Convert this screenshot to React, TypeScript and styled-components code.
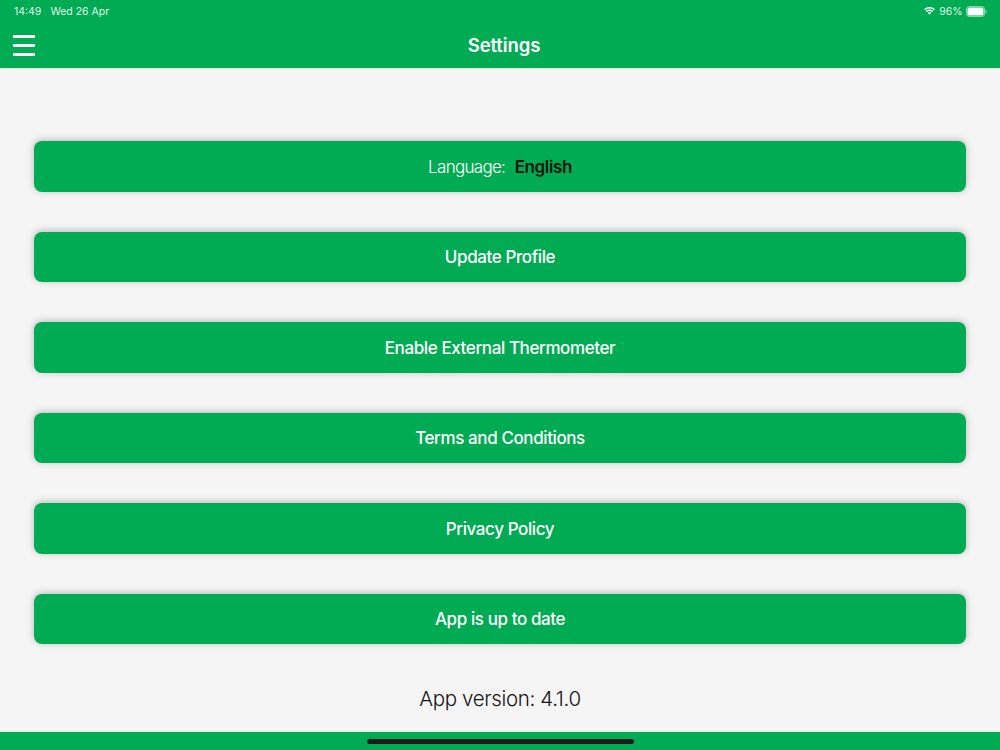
import React from "react";
import styled, { createGlobalStyle } from "styled-components";

const GREEN = "#01ab54";
const PAGE = "#f6f5f6";

const GlobalStyle = createGlobalStyle`
  html, body {
    margin: 0;
    padding: 0;
    background: ${PAGE};
    font-family: Inter, "Liberation Sans", sans-serif;
  }
`;

const Screen = styled.div`
  width: 1000px;
  height: 750px;
  display: flex;
  flex-direction: column;
  overflow: hidden;
  background: ${PAGE};
`;

const Header = styled.header`
  height: 68px;
  flex: none;
  background: ${GREEN};
  color: #fff;
  display: flex;
  flex-direction: column;
  box-shadow: 0 1px 1px rgba(0, 0, 0, 0.05);
`;

const StatusBar = styled.div`
  height: 22px;
  padding: 0 13px 0 14px;
  display: flex;
  align-items: center;
  justify-content: space-between;
  font-size: 10.5px;
  color: rgba(255, 255, 255, 0.9);
`;

const StatusGroup = styled.div<{ $gap: number }>`
  display: flex;
  align-items: center;
  gap: ${(p) => p.$gap}px;
`;

const NavBar = styled.div`
  flex: 1;
  display: grid;
  grid-template-columns: 1fr auto 1fr;
  align-items: center;
  padding-left: 13px;
`;

const Burger = styled.div`
  width: 22px;
  display: flex;
  flex-direction: column;
  gap: 6px;
`;

const BurgerLine = styled.span`
  display: block;
  height: 3px;
  border-radius: 1px;
  background: #fff;
`;

const Title = styled.h1`
  margin: 0 0 0 -5px;
  font-size: 18.5px;
  font-weight: 600;
  line-height: 24px;
  letter-spacing: -0.1px;
`;

const Content = styled.main`
  flex: 1;
  padding: 73px 34px 0;
  display: flex;
  flex-direction: column;
  gap: 40px;
`;

const MenuButton = styled.div`
  height: 50.5px;
  box-sizing: border-box;
  padding-top: 1px;
  border-radius: 8px;
  background: ${GREEN};
  box-shadow: 0 -1px 7px rgba(0, 0, 0, 0.26);
  color: #fff;
  font-size: 17px;
  font-weight: 500;
  letter-spacing: -0.4px;
  display: flex;
  align-items: center;
  justify-content: center;
  gap: 9.5px;
`;

const LanguageLabel = styled.span`
  font-weight: 300;
  letter-spacing: -0.7px;
`;

const LanguageValue = styled.span`
  color: #06150c;
  font-weight: 600;
`;

const Version = styled.div`
  margin-top: 1px;
  text-align: center;
  font-size: 20.5px;
  font-weight: 300;
  line-height: 28px;
  letter-spacing: -0.35px;
  color: #111;
`;

const Footer = styled.footer`
  height: 18px;
  flex: none;
  background: ${GREEN};
  display: flex;
  align-items: center;
  justify-content: center;
`;

const HomeIndicator = styled.div`
  width: 267px;
  height: 5px;
  border-radius: 3px;
  background: #1c1c1c;
`;

const items = ["Update Profile", "Enable External Thermometer", "Terms and Conditions", "Privacy Policy", "App is up to date"];

const WifiIcon = () => (
  <svg width="13" height="10" viewBox="0 0 14 10" fill="#fff">
    <path d="M7 2.2c1.900 0 3.600.7 4.900 1.900l1-1.100C11.300 1.500 9.200.6 7 .6S2.700 1.500 1.100 3l1 1.100C3.400 2.900 5.100 2.200 7 2.200z" />
    <path d="M7 5c1.100 0 2.100.4 2.900 1.100l1-1.100C9.800 4 8.500 3.400 7 3.400S4.200 4 3.100 5l1 1.100C4.900 5.400 5.900 5 7 5z" />
    <path d="M7 6.200c-.7 0-1.300.3-1.800.7L7 9l1.800-2.100c-.5-.4-1.100-.7-1.800-.7z" />
  </svg>
);

const BatteryIcon = () => (
  <svg width="21" height="11" viewBox="0 0 21 11">
    <rect x="0.5" y="0.5" width="18" height="10" rx="2.500" fill="none" stroke="#fff" strokeOpacity="0.5" />
    <rect x="1.500" y="1.500" width="16" height="8" rx="1.500" fill="#fff" />
    <path d="M19.500 3.700c.7.2 1.200.9 1.200 1.800s-.5 1.600-1.200 1.800z" fill="#fff" fillOpacity="0.6" />
  </svg>
);

export default function App() {
  return (
    <Screen>
      <GlobalStyle />
      <Header>
        <StatusBar>
          <StatusGroup $gap={9}>
            <span>14:49</span>
            <span>Wed 26 Apr</span>
          </StatusGroup>
          <StatusGroup $gap={3.5}>
            <WifiIcon />
            <span>96%</span>
            <BatteryIcon />
          </StatusGroup>
        </StatusBar>
        <NavBar>
          <Burger>
            <BurgerLine />
            <BurgerLine />
            <BurgerLine />
          </Burger>
          <Title>Settings</Title>
        </NavBar>
      </Header>
      <Content>
        <MenuButton>
          <LanguageLabel>Language:</LanguageLabel>
          <LanguageValue>English</LanguageValue>
        </MenuButton>
        {items.map((item) => (
          <MenuButton key={item}>{item}</MenuButton>
        ))}
        <Version>App version: 4.1.0</Version>
      </Content>
      <Footer>
        <HomeIndicator />
      </Footer>
    </Screen>
  );
}
